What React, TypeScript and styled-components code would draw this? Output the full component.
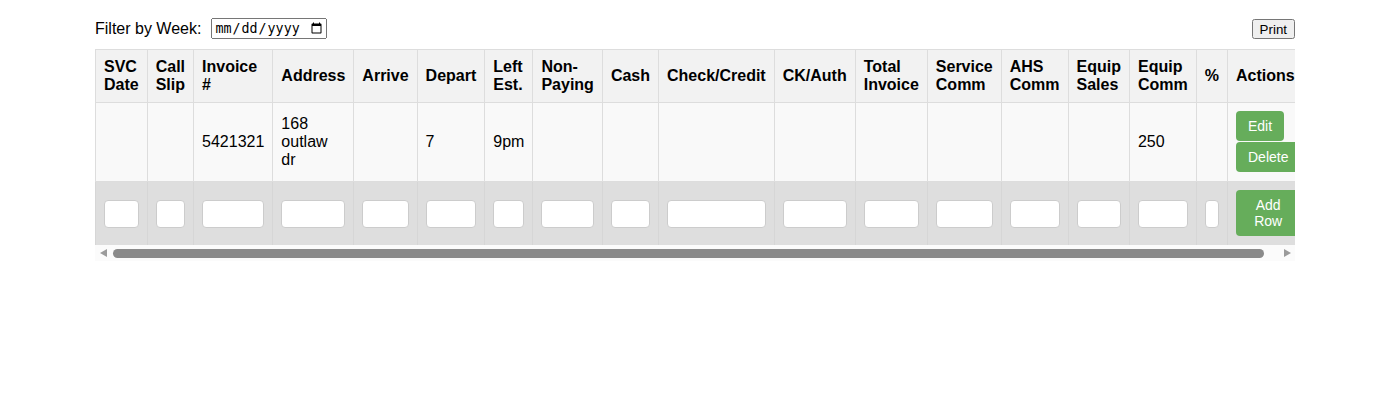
import React, { useEffect, useRef, useState } from "react";
import styled, { createGlobalStyle } from "styled-components";

const GlobalStyle = createGlobalStyle`
  body {
    margin: 0;
    background: #fff;
    font-family: "Liberation Sans", Arial, sans-serif;
    font-size: 16px;
    color: #000;
  }
`;

const Page = styled.div`
  width: 1200px;
  margin-left: calc(50% - 598.5px);
  padding-top: 18px;
`;

const Toolbar = styled.div`
  display: flex;
  align-items: center;
  justify-content: space-between;
  margin-bottom: 10px;
  height: 21px;
`;

const FilterLabel = styled.label`
  display: flex;
  align-items: center;
  gap: 10px;
  font-size: 16px;
`;

const DateInput = styled.input`
  box-sizing: border-box;
  width: 116px;
  height: 21px;
`;

const PrintButton = styled.button`
  font-family: "Liberation Sans", Arial, sans-serif;
  font-size: 13.33px;
  padding: 1px 6px;
  height: 20px;
`;

const Scroller = styled.div`
  overflow: hidden;
`;

const ScrollBar = styled.div`
  display: flex;
  align-items: center;
  height: 16px;
  margin-top: -1px;
  background: #fbfbfb;
`;

const ScrollArrow = styled.div<{ $dir: "left" | "right" }>`
  flex: 0 0 16px;
  height: 16px;
  display: flex;
  align-items: center;
  justify-content: center;

  &::before {
    content: "";
    width: 0;
    height: 0;
    border-top: 4.5px solid transparent;
    border-bottom: 4.5px solid transparent;
    ${({ $dir }) =>
      $dir === "left"
        ? "border-right: 7px solid #9b9b9b;"
        : "border-left: 7px solid #9b9b9b;"}
  }
`;

const ScrollTrack = styled.div`
  flex: 1;
  height: 16px;
  padding: 4px 2px;
  box-sizing: border-box;
  display: flex;
`;

const ScrollThumb = styled.div`
  height: 9px;
  background: #8a8a8a;
  border-radius: 4.5px;
`;

const Table = styled.table`
  width: 100%;
  border-collapse: collapse;
`;

const HeadCell = styled.th`
  background: #f2f2f2;
  border: 1px solid #ddd;
  padding: 8px;
  text-align: left;
  font-weight: bold;
  vertical-align: middle;
`;

const Row = styled.tr<{ $entry?: boolean }>`
  background: ${({ $entry }) => ($entry ? "#dedede" : "#f9f9f9")};
`;

const Cell = styled.td<{ $entry?: boolean }>`
  border: 1px solid ${({ $entry }) => ($entry ? "#d6d6d6" : "#ddd")};
  padding: 8px;
  vertical-align: middle;
`;

const Field = styled.input`
  box-sizing: border-box;
  width: 100%;
  height: 28px;
  padding: 5px;
  font-size: 14px;
  font-family: "Liberation Sans", Arial, sans-serif;
  background: #fff;
  border: 1px solid #ccc;
  border-radius: 4px;
`;

const ActionButton = styled.button<{ $gap?: boolean }>`
  display: inline-block;
  background: #66ad5b;
  color: #fff;
  border: none;
  border-radius: 4px;
  padding: 7px 12px;
  font-family: "Liberation Sans", Arial, sans-serif;
  font-size: 14px;
  line-height: 16px;
  margin: 0 ${({ $gap }) => ($gap ? "5px" : "0")} 1px 0;
  cursor: pointer;
`;

const columns = [
  "SVC Date",
  "Call Slip",
  "Invoice #",
  "Address",
  "Arrive",
  "Depart",
  "Left Est.",
  "Non-Paying",
  "Cash",
  "Check/Credit",
  "CK/Auth",
  "Total Invoice",
  "Service Comm",
  "AHS Comm",
  "Equip Sales",
  "Equip Comm",
  "%",
];

const record = [
  "",
  "",
  "5421321",
  "168 outlaw dr",
  "",
  "7",
  "9pm",
  "",
  "",
  "",
  "",
  "",
  "",
  "",
  "",
  "250",
  "",
];

export default function App() {
  const scrollRef = useRef<HTMLDivElement>(null);
  const [ratio, setRatio] = useState(0.99);

  useEffect(() => {
    const el = scrollRef.current;
    if (el && el.scrollWidth > 0) {
      setRatio(Math.min(1, el.clientWidth / el.scrollWidth));
    }
  }, []);

  return (
    <>
      <GlobalStyle />
      <Page>
        <Toolbar>
          <FilterLabel>
            Filter by Week:
            <DateInput type="date" />
          </FilterLabel>
          <PrintButton>Print</PrintButton>
        </Toolbar>
        <Scroller ref={scrollRef}>
          <Table>
            <thead>
              <tr>
                {columns.map((c) => (
                  <HeadCell key={c}>{c}</HeadCell>
                ))}
                <HeadCell>Actions</HeadCell>
              </tr>
            </thead>
            <tbody>
              <Row>
                {record.map((v, i) => (
                  <Cell key={i}>{v}</Cell>
                ))}
                <Cell>
                  <ActionButton $gap>Edit</ActionButton>
                  <ActionButton>Delete</ActionButton>
                </Cell>
              </Row>
              <Row $entry>
                {columns.map((c) => (
                  <Cell $entry key={c}>
                    <Field type="text" />
                  </Cell>
                ))}
                <Cell $entry>
                  <ActionButton>Add Row</ActionButton>
                </Cell>
              </Row>
            </tbody>
          </Table>
        </Scroller>
        <ScrollBar>
          <ScrollArrow $dir="left" />
          <ScrollTrack>
            <ScrollThumb style={{ width: `${ratio * 100}%` }} />
          </ScrollTrack>
          <ScrollArrow $dir="right" />
        </ScrollBar>
      </Page>
    </>
  );
}
